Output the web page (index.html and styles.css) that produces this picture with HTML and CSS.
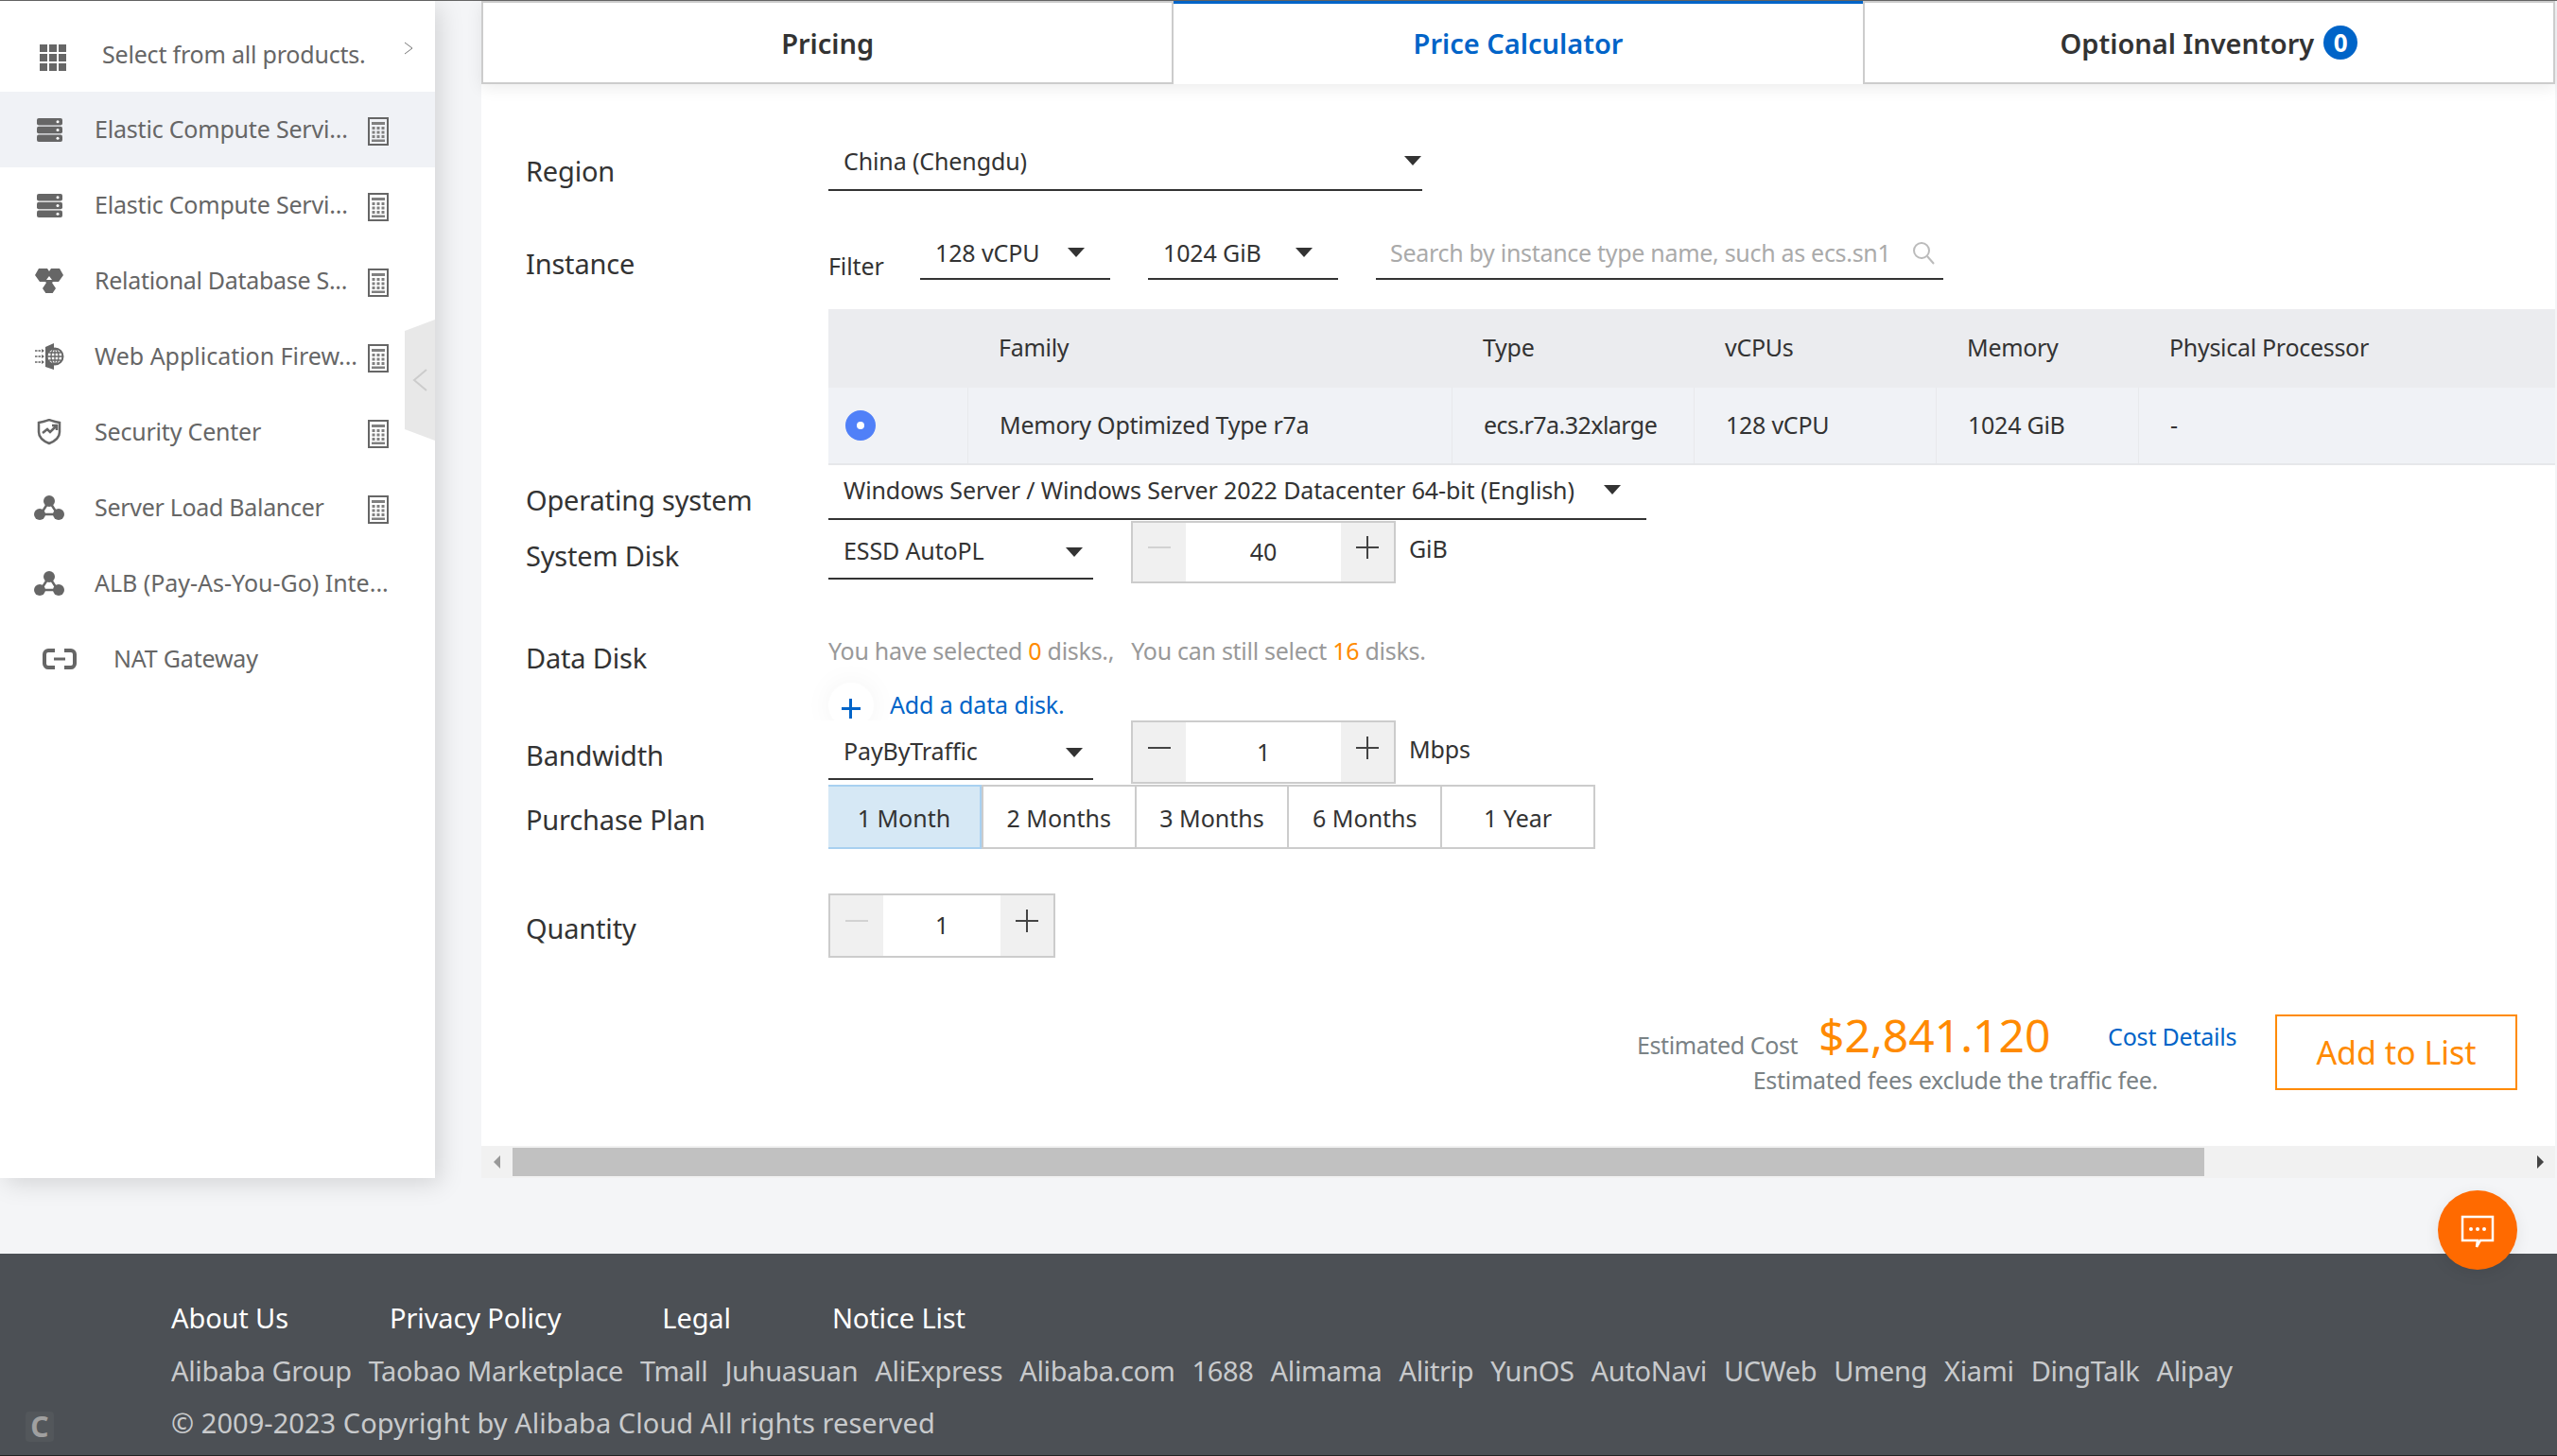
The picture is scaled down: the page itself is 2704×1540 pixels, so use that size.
FILE: index.html
```html
<!DOCTYPE html>
<html>
<head>
    <title>Price Calculator</title>
    <link rel="stylesheet" href="styles.css">
</head>
<body>
    <svg class="defs" width="0" height="0">
        <symbol id="calc" viewBox="0 0 22 30">
            <rect x="1" y="1" width="20" height="28" fill="none" stroke="currentColor" stroke-width="2"/>
            <rect x="4" y="5" width="14" height="3" fill="#808080"/>
            <path fill="#808080" d="M4.500 10h3v3h-3zM9.500 10h3v3h-3zM14.500 10h3v3h-3zM4.500 14.500h3v3h-3zM9.500 14.500h3v3h-3zM14.500 14.500h3v3h-3zM4.500 19h3v3h-3zM9.500 19h3v3h-3zM14.500 19h3v3h-3z"/>
            <rect x="4" y="23.500" width="14" height="2.500" fill="#808080"/>
        </symbol>
        <symbol id="server" viewBox="0 0 27 25">
            <rect y="0" width="27" height="7.500" rx="2" fill="currentColor"/>
            <rect y="8.700" width="27" height="7.500" rx="2" fill="currentColor"/>
            <rect y="17.500" width="27" height="7.500" rx="2" fill="currentColor"/>
            <circle cx="22" cy="3.700" r="1.500" fill="#fff"/>
            <circle cx="22" cy="12.500" r="1.500" fill="#fff"/>
            <circle cx="22" cy="21.200" r="1.500" fill="#fff"/>
        </symbol>
        <symbol id="rds" viewBox="0 0 30 26">
            <path fill="currentColor" d="M4 0h9l2 3 2-3h9l4 7-5 7h-6l-1 1 4 6-4 6h-6l-4-6 4-6-1-1H5L0 7z"/>
            <path fill="#fff" d="M15 8l3 4h-6z"/>
        </symbol>
        <symbol id="waf" viewBox="0 0 32 28">
            <path d="M12 4l9-4v28l-9-3z" fill="currentColor"/>
            <circle cx="22" cy="14" r="8.500" fill="#fff" stroke="currentColor" stroke-width="2"/>
            <path d="M22 6v16M14 14h16M15.500 10h13M15.500 18h13" stroke="currentColor" stroke-width="1.300"/>
            <ellipse cx="22" cy="14" rx="4" ry="8" fill="none" stroke="currentColor" stroke-width="1.300"/>
            <path d="M1 8h8M1 14h8M1 20h8" stroke="currentColor" stroke-width="1.500" stroke-dasharray="2.500 1"/>
            <path d="M8 6l3 2-3 2zM8 12l3 2-3 2zM8 18l3 2-3 2z" fill="currentColor"/>
        </symbol>
        <symbol id="shield" viewBox="0 0 26 28">
            <path d="M2 4c6-1 8-2 11-3 3 1 5 2 11 3v10c0 6-6 10-11 12C8 24 2 20 2 14z" fill="none" stroke="currentColor" stroke-width="2.500"/>
            <path d="M6 15l5-4 3 3 6-6M16 7h5v5" fill="none" stroke="currentColor" stroke-width="2.500"/>
        </symbol>
        <symbol id="slb" viewBox="0 0 32 26">
            <path d="M16 6L7 20h18z" fill="none" stroke="currentColor" stroke-width="2.500"/>
            <circle cx="16" cy="6" r="6" fill="currentColor"/>
            <circle cx="6" cy="20" r="6" fill="currentColor"/>
            <circle cx="26" cy="20" r="6" fill="currentColor"/>
        </symbol>
        <symbol id="nat" viewBox="0 0 36 22">
            <path d="M13 2H6C4 2 2 4 2 6v10c0 2 2 4 4 4h7M23 2h7c2 0 4 2 4 4v10c0 2-2 4-4 4h-7" fill="none" stroke="currentColor" stroke-width="4"/>
            <path d="M12 11h12" stroke="currentColor" stroke-width="3"/>
        </symbol>
    </svg>

    <div class="page">
        <div class="workspace">
            <aside class="sidebar">
                <div class="all-products">
                    <svg class="grid-icon" viewBox="0 0 28 28">
                        <path fill="#666" d="M0 0h8v8H0zM10 0h8v8h-8zM20 0h8v8h-8zM0 10h8v8H0zM10 10h8v8h-8zM20 10h8v8h-8zM0 20h8v8H0zM10 20h8v8h-8zM20 20h8v8h-8z"/>
                    </svg>
                    <span class="all-text">Select from all products.</span>
                    <svg class="all-arrow" viewBox="0 0 10 14"><path d="M1 1l8 6-8 6" fill="none" stroke="#777" stroke-width="1"/></svg>
                </div>
                <div class="item active">
                    <span class="item-icon"><svg width="27" height="25"><use href="#server"/></svg></span>
                    <span class="item-text">Elastic Compute Servi...</span>
                    <svg class="calc" width="22" height="30"><use href="#calc"/></svg>
                </div>
                <div class="item">
                    <span class="item-icon"><svg width="27" height="25"><use href="#server"/></svg></span>
                    <span class="item-text">Elastic Compute Servi...</span>
                    <svg class="calc" width="22" height="30"><use href="#calc"/></svg>
                </div>
                <div class="item">
                    <span class="item-icon"><svg width="30" height="26"><use href="#rds"/></svg></span>
                    <span class="item-text text-tight">Relational Database S...</span>
                    <svg class="calc" width="22" height="30"><use href="#calc"/></svg>
                </div>
                <div class="item">
                    <span class="item-icon"><svg width="32" height="28"><use href="#waf"/></svg></span>
                    <span class="item-text text-wide">Web Application Firew...</span>
                    <svg class="calc" width="22" height="30"><use href="#calc"/></svg>
                </div>
                <div class="item">
                    <span class="item-icon"><svg width="26" height="28"><use href="#shield"/></svg></span>
                    <span class="item-text">Security Center</span>
                    <svg class="calc" width="22" height="30"><use href="#calc"/></svg>
                </div>
                <div class="item">
                    <span class="item-icon"><svg width="32" height="26"><use href="#slb"/></svg></span>
                    <span class="item-text text-tight">Server Load Balancer</span>
                    <svg class="calc" width="22" height="30"><use href="#calc"/></svg>
                </div>
                <div class="item">
                    <span class="item-icon"><svg width="32" height="26"><use href="#slb"/></svg></span>
                    <span class="item-text text-wide">ALB (Pay-As-You-Go) Inte...</span>
                </div>
                <div class="item nat">
                    <span class="item-icon"><svg width="36" height="22"><use href="#nat"/></svg></span>
                    <span class="item-text">NAT Gateway</span>
                </div>
                <div class="collapse-handle">
                    <svg viewBox="0 0 16 24" width="16" height="24"><path d="M15 1L2 12l13 11" fill="none" stroke="#ccc" stroke-width="2"/></svg>
                </div>
            </aside>

            <main class="main">
                <div class="tabs">
                    <div class="tab">Pricing</div>
                    <div class="tab tab-active">Price Calculator</div>
                    <div class="tab">Optional Inventory <span class="badge">0</span></div>
                </div>

                <div class="form">
                    <div class="row row-region">
                        <div class="label">Region</div>
                        <div class="select select-region"><span>China (Chengdu)</span><i class="caret"></i></div>
                    </div>

                    <div class="row row-instance">
                        <div class="label">Instance</div>
                        <div class="instance">
                            <div class="filters">
                                <span class="filter-label">Filter</span>
                                <div class="select select-filter"><span>128 vCPU</span><i class="caret"></i></div>
                                <div class="select select-filter"><span>1024 GiB</span><i class="caret"></i></div>
                                <div class="search">
                                    <span>Search by instance type name, such as ecs.sn1</span>
                                    <svg width="26" height="26" viewBox="0 0 26 26"><circle cx="11" cy="11" r="8" fill="none" stroke="#bbb" stroke-width="2"/><path d="M17 17l7 8" stroke="#bbb" stroke-width="2"/></svg>
                                </div>
                            </div>
                            <div class="table">
                                <div class="thead">
                                    <div class="cell cell-radio"></div>
                                    <div class="cell cell-family">Family</div>
                                    <div class="cell cell-type">Type</div>
                                    <div class="cell cell-cpu">vCPUs</div>
                                    <div class="cell cell-mem">Memory</div>
                                    <div class="cell cell-proc">Physical Processor</div>
                                </div>
                                <div class="tbody">
                                    <div class="cell cell-radio"><i class="radio"></i></div>
                                    <div class="cell cell-family">Memory Optimized Type r7a</div>
                                    <div class="cell cell-type">ecs.r7a.32xlarge</div>
                                    <div class="cell cell-cpu">128 vCPU</div>
                                    <div class="cell cell-mem">1024 GiB</div>
                                    <div class="cell cell-proc">-</div>
                                </div>
                            </div>
                        </div>
                    </div>

                    <div class="row row-os">
                        <div class="label">Operating system</div>
                        <div class="select select-os"><span>Windows Server / Windows Server 2022 Datacenter 64-bit (English)</span><i class="caret"></i></div>
                    </div>

                    <div class="row row-disk">
                        <div class="label">System Disk</div>
                        <div class="select select-disk"><span>ESSD AutoPL</span><i class="caret"></i></div>
                        <div class="stepper">
                            <div class="step-btn"><i class="minus off"></i></div>
                            <div class="step-val">40</div>
                            <div class="step-btn"><i class="plus"></i></div>
                        </div>
                        <span class="unit">GiB</span>
                    </div>

                    <div class="row row-data">
                        <div class="label">Data Disk</div>
                        <div class="data-disk">
                            <div class="disk-note">You have selected <em>0</em> disks.<span class="note-gap">,</span>You can still select <em>16</em> disks.</div>
                            <div class="add-disk"><i class="add-plus"></i>Add a data disk.</div>
                        </div>
                    </div>

                    <div class="row row-band">
                        <div class="label">Bandwidth</div>
                        <div class="select select-disk"><span>PayByTraffic</span><i class="caret"></i></div>
                        <div class="stepper">
                            <div class="step-btn"><i class="minus"></i></div>
                            <div class="step-val">1</div>
                            <div class="step-btn"><i class="plus"></i></div>
                        </div>
                        <span class="unit">Mbps</span>
                    </div>

                    <div class="row row-plan">
                        <div class="label">Purchase Plan</div>
                        <div class="plans">
                            <div class="plan plan-on">1 Month</div>
                            <div class="plan">2 Months</div>
                            <div class="plan">3 Months</div>
                            <div class="plan">6 Months</div>
                            <div class="plan">1 Year</div>
                        </div>
                    </div>

                    <div class="row row-qty">
                        <div class="label">Quantity</div>
                        <div class="stepper stepper-qty">
                            <div class="step-btn"><i class="minus off"></i></div>
                            <div class="step-val">1</div>
                            <div class="step-btn"><i class="plus"></i></div>
                        </div>
                    </div>

                    <div class="summary">
                        <div class="cost">
                            <div class="cost-line">
                                <span class="cost-label">Estimated Cost</span>
                                <span class="price">$2,841.120</span>
                                <span class="cost-link">Cost Details</span>
                            </div>
                            <div class="cost-note">Estimated fees exclude the traffic fee.</div>
                        </div>
                        <div class="add-btn">Add to List</div>
                    </div>
                </div>

                <div class="hscroll">
                    <i class="arrow-left"></i>
                    <div class="thumb"></div>
                    <i class="arrow-right"></i>
                </div>
            </main>
        </div>

        <footer class="footer">
            <div class="foot-main">
                <span>About Us</span>
                <span>Privacy Policy</span>
                <span>Legal</span>
                <span>Notice List</span>
            </div>
            <div class="foot-links">
                <span>Alibaba Group</span>
                <span>Taobao Marketplace</span>
                <span>Tmall</span>
                <span>Juhuasuan</span>
                <span>AliExpress</span>
                <span>Alibaba.com</span>
                <span>1688</span>
                <span>Alimama</span>
                <span>Alitrip</span>
                <span>YunOS</span>
                <span>AutoNavi</span>
                <span>UCWeb</span>
                <span>Umeng</span>
                <span>Xiami</span>
                <span>DingTalk</span>
                <span>Alipay</span>
            </div>
            <div class="foot-copy">© 2009-2023 Copyright by Alibaba Cloud All rights reserved</div>
            <div class="corner-c">C</div>
        </footer>

        <div class="chat-fab">
            <svg width="36" height="36" viewBox="0 0 36 36">
                <path d="M2 2h32v25H21l-4 7 1-7H2z" fill="none" stroke="#fff" stroke-width="2.500"/>
                <circle cx="11" cy="15" r="2" fill="#fff"/>
                <circle cx="18" cy="15" r="2" fill="#fff"/>
                <circle cx="25" cy="15" r="2" fill="#fff"/>
            </svg>
        </div>
    </div>
</body>
</html>
```

FILE: styles.css
```css
* { box-sizing: border-box; }
html, body { margin: 0; height: 100%; }
body { background: #f4f5f7; font-family: "Noto Sans", "Open Sans", sans-serif; color: #333; overflow: hidden; }
i { display: block; font-style: normal; }
.defs { position: absolute; }

.page { position: relative; height: 1540px; border-top: 1px solid #666; }
.workspace { display: flex; align-items: flex-start; height: 1245px; }

/* sidebar */
.sidebar { position: relative; flex: 0 0 460px; height: 1245px; padding-top: 16px; background: #fff; color: #666; box-shadow: 6px 6px 24px rgba(0,0,0,.13); font-size: 25px; letter-spacing: -.2px; }
.all-products { display: flex; align-items: center; height: 80px; padding-left: 42px; }
.grid-icon { width: 28px; height: 28px; flex: none; margin-top: 8px; }
.all-text { margin-left: 38px; width: 319px; white-space: nowrap; }
.all-arrow { width: 10px; height: 14px; margin: -12px 0 0 0; }
.item { display: flex; align-items: center; height: 80px; padding-left: 36px; white-space: nowrap; }
.item.active { background: #f0f2f6; }
.item-icon { display: flex; align-items: center; justify-content: center; width: 32px; margin-right: 32px; flex: none; }
.item-text { width: 289px; flex: none; padding-bottom: 2px; }
.text-tight { letter-spacing: -.3px; }
.text-wide { letter-spacing: -.02px; }
.calc { flex: none; margin-top: 4px; color: #666; }
.item.nat { padding-left: 45px; }
.item.nat .item-icon { width: 36px; margin-right: 39px; }
.collapse-handle { position: absolute; left: 428px; top: 337px; width: 32px; height: 128px; display: flex; align-items: center; justify-content: center; background: #e8e8e8; clip-path: polygon(0 12px, 100% 0, 100% 100%, 0 116px); }

/* main */
.main { flex: 0 0 2193px; margin-left: 49px; height: 1245px; display: flex; flex-direction: column; background: #fff; }
.tabs { display: flex; height: 88px; background: #fff; box-shadow: 0 4px 16px rgba(0,0,0,.08); position: relative; }
.tab { flex: 1; display: flex; align-items: center; justify-content: center; gap: 10px; border: 2px solid #ccc; font-size: 29px; font-weight: 600; color: #333; white-space: nowrap; }
.tab-active { border: 0; border-top: 3px solid #0064c8; padding-bottom: 3px; color: #0064c8; }
.badge { width: 36px; height: 36px; border-radius: 50%; background: #0064c8; color: #fff; text-align: center; line-height: 36px; font-size: 26px; font-weight: 700; }

.form { flex: 1; padding-left: 47px; font-size: 25px; letter-spacing: -.12px; }
.row { display: flex; align-items: flex-start; }
.label { flex: 0 0 320px; font-size: 29px; line-height: 40px; letter-spacing: -.18px; white-space: nowrap; }
.select { display: flex; align-items: center; justify-content: space-between; border-bottom: 2px solid #333; padding-left: 16px; white-space: nowrap; }
.caret { width: 0; height: 0; border-left: 9px solid transparent; border-right: 9px solid transparent; border-top: 10px solid #333; }

.row-region { margin-top: 53px; height: 60px; }
.row-region .label { margin-top: 19px; }
.select-region { width: 628px; height: 60px; padding-right: 1px; padding-bottom: 2px; }

.row-instance { margin-top: 39px; }
.row-instance .label { margin-top: 18px; }
.instance { flex: none; width: 1826px; }
.filters { display: flex; align-items: flex-end; height: 55px; }
.filter-label { width: 97px; line-height: 34px; margin-bottom: -2px; }
.select-filter { width: 201px; height: 55px; margin-right: 40px; padding-right: 27px; padding-bottom: 2px; }
.search { display: flex; align-items: center; justify-content: space-between; width: 600px; height: 55px; padding: 0 8px 2px 15px; border-bottom: 2px solid #333; color: #aaa; letter-spacing: -.3px; white-space: nowrap; }

.table { margin-top: 31px; }
.thead, .tbody { display: flex; align-items: stretch; }
.thead { height: 83px; background: #ebecef; letter-spacing: -.3px; }
.tbody { height: 82px; background: #f0f2f6; border-bottom: 2px solid #e6e7ea; letter-spacing: -.25px; }
.cell { display: flex; align-items: center; padding: 0 0 3px 33px; white-space: nowrap; }
.tbody .cell + .cell { border-left: 1px solid #e8e9ec; }
.cell-radio { width: 147px; padding: 0 0 0 18px; }
.cell-family { width: 512px; }
.cell-type { width: 256px; }
.tbody .cell-type { letter-spacing: -.55px; }
.cell-cpu { width: 256px; }
.cell-mem { width: 214px; }
.cell-proc { flex: 1; }
.radio { width: 32px; height: 32px; border-radius: 50%; border: 12px solid #5080f8; background: #fff; }

.row-os { height: 58px; }
.row-os .label { margin-top: 17px; }
.select-os { width: 865px; height: 58px; padding-right: 27px; padding-bottom: 4px; }

.row-disk { height: 67px; }
.row-disk .label { margin-top: 18px; }
.select-disk { width: 280px; height: 63px; padding-top: 2px; padding-right: 11px; margin-right: 40px; }
.select-disk .caret { margin-top: 4px; }
.stepper { display: flex; width: 280px; height: 66px; margin-top: 1px; border: 2px solid #ccc; }
.step-btn { flex: 0 0 56px; display: flex; align-items: center; justify-content: center; padding-bottom: 10px; background: #f0f0f0; }
.step-val { flex: 1; display: flex; align-items: center; justify-content: center; padding-bottom: 2px; }
.minus { width: 24px; height: 2px; background: #444; }
.minus.off { background: #d2d2d2; }
.plus { position: relative; width: 24px; height: 24px; }
.plus::before { content: ""; position: absolute; left: 0; top: 11px; width: 24px; height: 2px; background: #444; }
.plus::after { content: ""; position: absolute; left: 11px; top: 0; width: 2px; height: 24px; background: #444; }
.unit { margin-left: 14px; line-height: 60px; }

.row-data { margin-top: 44px; height: 101px; }
.row-data .label { margin-top: 15px; }
.disk-note { color: #999; line-height: 30px; margin-top: 12px; letter-spacing: -.28px; white-space: nowrap; }
.disk-note em { font-style: normal; color: #ff8a00; }
.note-gap { margin-right: 18px; }
.add-disk { display: flex; align-items: center; margin-top: 17px; color: #0064c8; line-height: 40px; }
.add-plus { position: relative; width: 48px; height: 48px; margin-right: 17px; margin-top: 2px; border-radius: 50%; background: #fff; box-shadow: 0 0 30px rgba(0,0,0,.05); }
.add-plus::before { content: ""; position: absolute; left: 14px; top: 26px; width: 20px; height: 3px; background: #0064c8; }
.add-plus::after { content: ""; position: absolute; left: 22px; top: 17px; width: 3px; height: 21px; background: #0064c8; }

.row-band { position: relative; height: 68px; background: #fff; }
.row-band .label { margin-top: 17px; }
.row-band .stepper { height: 67px; margin-top: 0; }

.row-plan { height: 68px; }
.row-plan .label { margin-top: 17px; }
.plans { display: flex; width: 811px; height: 68px; border: 2px solid #ccc; letter-spacing: 0; }
.plan { flex: 1; display: flex; align-items: center; justify-content: center; padding-top: 2px; border-left: 2px solid #ccc; white-space: nowrap; }
.plan:first-child { border-left: 0; }
.plan-on { background: #d6e8f5; margin: -2px 0 -2px -2px; border: 2px solid #a8d0f0; }

.row-qty { margin-top: 47px; height: 68px; }
.row-qty .label { margin-top: 17px; }
.stepper-qty { width: 240px; height: 68px; margin-top: 0; }

.summary { display: flex; justify-content: flex-end; align-items: flex-start; margin-top: 60px; padding-right: 40px; }
.cost { margin-right: 40px; text-align: right; width: 635px; }
.cost-line { display: flex; align-items: center; height: 46px; white-space: nowrap; text-align: left; }
.cost-label { color: #7a8285; margin-top: 18px; letter-spacing: -.4px; }
.price { margin-left: 22px; width: 306px; flex: none; margin-top: -3px; font-size: 48px; letter-spacing: 0; color: #ff8a00; }
.cost-link { color: #0064c8; letter-spacing: -.2px; }
.cost-note { margin: 8px 84px 0 0; color: #7a8285; line-height: 30px; letter-spacing: -.27px; white-space: nowrap; }
.add-btn { width: 256px; height: 80px; display: flex; align-items: center; justify-content: center; border: 2px solid #ff8a00; color: #ff8a00; font-size: 34px; letter-spacing: 0; }

.hscroll { position: relative; height: 34px; background: #f1f1f1; padding: 2px 0; }
.thumb { margin-left: 33px; width: 1789px; height: 30px; background: #c1c1c1; }
.arrow-left { position: absolute; left: 13px; top: 10px; width: 0; height: 0; border-top: 7px solid transparent; border-bottom: 7px solid transparent; border-right: 7px solid #999; }
.arrow-right { position: absolute; right: 12px; top: 10px; width: 0; height: 0; border-top: 7px solid transparent; border-bottom: 7px solid transparent; border-left: 7px solid #444; }

/* footer */
.footer { position: relative; margin-top: 80px; height: 214px; padding: 46px 0 0 181px; background: #4c5055; color: #c8cacc; font-size: 29px; border-bottom: 1px solid #222; white-space: nowrap; }
.foot-main { display: flex; gap: 107px; color: #fff; line-height: 44px; letter-spacing: -.12px; }
.foot-links { display: flex; gap: 18px; margin-top: 12px; line-height: 44px; letter-spacing: -.34px; }
.foot-copy { margin-top: 11px; line-height: 44px; letter-spacing: .05px; }
.corner-c { position: absolute; left: 27px; top: 167px; width: 30px; height: 32px; border-radius: 4px; background: #53575b; color: #a0a0a0; font-size: 30px; font-weight: 700; line-height: 32px; text-align: center; }

.chat-fab { position: absolute; left: 2578px; top: 1258px; width: 84px; height: 84px; padding-top: 4px; border-radius: 50%; background: #ff6a00; display: flex; align-items: center; justify-content: center; box-shadow: 0 4px 16px rgba(0,0,0,.08); }
```
